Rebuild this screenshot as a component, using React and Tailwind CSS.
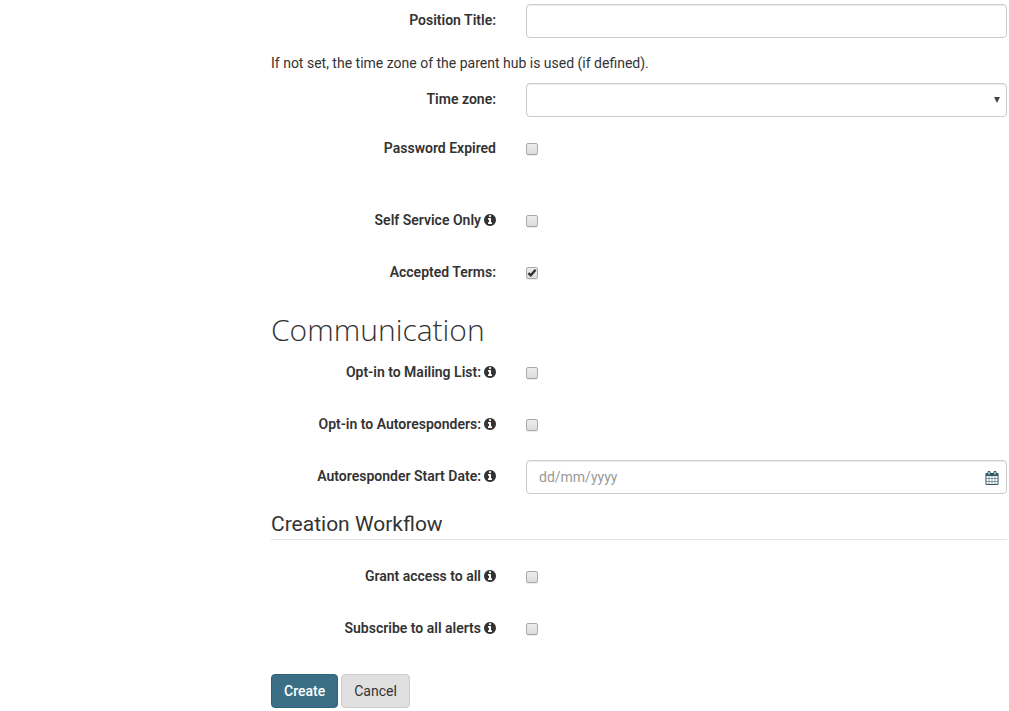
import { useState } from 'react';

const inputClass =
  'block h-[34px] w-full appearance-none rounded border border-[#ccc] bg-white px-3 py-1.5 text-sm text-[#555] shadow-[inset_0_1px_1px_rgba(0,0,0,0.075)] outline-none placeholder:text-[#999] focus:border-[#66afe9]';

function InfoIcon() {
  return (
    <svg className="h-3.5 w-3 shrink-0" viewBox="128 0 1536 1792" fill="currentColor" aria-hidden="true">
      <path d="M1152 1376v-160q0-14-9-23t-23-9h-96v-512q0-14-9-23t-23-9h-320q-14 0-23 9t-9 23v160q0 14 9 23t23 9h96v320h-96q-14 0-23 9t-9 23v160q0 14 9 23t23 9h448q14 0 23-9t9-23zm-128-896v-160q0-14-9-23t-23-9h-192q-14 0-23 9t-9 23v160q0 14 9 23t23 9h192q14 0 23-9t9-23zm640 416q0 209-103 385.5t-279.5 279.5-385.5 103-385.5-103-279.5-279.5-103-385.5 103-385.5 279.5-279.5 385.5-103 385.5 103 279.5 279.5 103 385.5z" />
    </svg>
  );
}

function CalendarIcon() {
  return (
    <svg className="size-3.5" viewBox="0 0 1792 1792" fill="currentColor" aria-hidden="true">
      <path d="M192 1664h288v-288h-288v288zm352 0h320v-288h-320v288zm-352-352h288v-320h-288v320zm352 0h320v-320h-320v320zm-352-384h288v-288h-288v288zm736 736h320v-288h-320v288zm-384-736h320v-288h-320v288zm768 736h288v-288h-288v288zm-384-352h320v-320h-320v320zm-352-864v-288q0-13-9.5-22.5t-22.5-9.5h-64q-13 0-22.5 9.5t-9.5 22.5v288q0 13 9.5 22.5t22.5 9.5h64q13 0 22.5-9.5t9.5-22.5zm736 864h288v-320h-288v320zm-384-384h320v-288h-320v288zm384 0h288v-288h-288v288zm32-480v-288q0-13-9.5-22.5t-22.5-9.5h-64q-13 0-22.5 9.5t-9.5 22.5v288q0 13 9.5 22.5t22.5 9.5h64q13 0 22.5-9.5t9.5-22.5zm384-64v1280q0 52-38 90t-90 38h-1408q-52 0-90-38t-38-90v-1280q0-52 38-90t90-38h128v-96q0-66 47-113t113-47h64q66 0 113 47t47 113v96h384v-96q0-66 47-113t113-47h64q66 0 113 47t47 113v96h128q52 0 90 38t38 90z" />
    </svg>
  );
}

function FormRow({ id, label, info, children }) {
  return (
    <div className="mb-[15px] grid grid-cols-[225px_1fr] gap-[30px]">
      <label htmlFor={id} className="flex items-center justify-end gap-[3px] self-start pt-1.5 text-right font-semibold">
        {label}
        {info && <InfoIcon />}
      </label>
      <div>{children}</div>
    </div>
  );
}

function CheckboxRow({ id, label, info, checked, onChange }) {
  return (
    <FormRow id={id} label={label} info={info}>
      <div className="grid h-[37px] items-start justify-items-start pt-[11px]">
        <input
          id={id}
          type="checkbox"
          checked={checked}
          onChange={onChange}
          className="col-start-1 row-start-1 size-3 appearance-none rounded-xs border border-[#a9a9a9] bg-linear-to-b from-[#ededed] to-[#dcdcdc] shadow-[0_1px_0_rgba(0,0,0,0.08)]"
        />
        {checked && (
          <svg className="pointer-events-none col-start-1 row-start-1 size-3" viewBox="0 0 12 12" fill="none" stroke="#333" strokeWidth="2.4" aria-hidden="true">
            <path d="M2.4 6.2l2.4 2.2L9.6 2.8" />
          </svg>
        )}
      </div>
    </FormRow>
  );
}

export default function App() {
  const [form, setForm] = useState({
    passwordExpired: false,
    selfService: false,
    acceptedTerms: true,
    mailingList: false,
    autoresponders: false,
    grantAccess: false,
    subscribeAlerts: false,
  });

  const check = (id) => ({
    id,
    checked: form[id],
    onChange: (e) => setForm({ ...form, [id]: e.target.checked }),
  });

  return (
    <div className="bg-white font-['Roboto',sans-serif] text-sm leading-5 text-[#333]">
      <form className="ml-64 pt-1 pr-0.5 pb-[3px] pl-[15px]" onSubmit={(e) => e.preventDefault()}>
        <FormRow id="positionTitle" label="Position Title:">
          <input id="positionTitle" type="text" className={inputClass} />
        </FormRow>

        <p className="mb-2.5">If not set, the time zone of the parent hub is used (if defined).</p>
        <FormRow id="timeZone" label="Time zone:">
          <div className="relative">
            <select id="timeZone" className={inputClass}>
              <option value=""></option>
            </select>
            <svg className="pointer-events-none absolute top-3.5 right-1.5 h-1.5 w-2" viewBox="0 0 8 6" fill="#444" aria-hidden="true">
              <path d="M1 0h6L4 6z" />
            </svg>
          </div>
        </FormRow>

        <div className="pb-5">
          <CheckboxRow {...check('passwordExpired')} label="Password Expired" />
        </div>
        <CheckboxRow {...check('selfService')} label="Self Service Only" info />
        <CheckboxRow {...check('acceptedTerms')} label="Accepted Terms:" />

        <h2 className="mb-1.5 pt-0.5 font-['Open_Sans',sans-serif] text-[30px] leading-10 font-light">
          Communication
        </h2>
        <CheckboxRow {...check('mailingList')} label="Opt-in to Mailing List:" info />
        <CheckboxRow {...check('autoresponders')} label="Opt-in to Autoresponders:" info />
        <FormRow id="startDate" label="Autoresponder Start Date:" info>
          <div className="relative">
            <input id="startDate" type="text" placeholder="dd/mm/yyyy" className={inputClass} />
            <button type="button" aria-label="Pick a date" className="absolute top-[11px] right-2 text-[#2f5568]">
              <CalendarIcon />
            </button>
          </div>
        </FormRow>

        <h3 className="mb-5 border-b border-[#e5e5e5] text-[21px] leading-[30px]">Creation Workflow</h3>
        <CheckboxRow {...check('grantAccess')} label="Grant access to all" info />
        <CheckboxRow {...check('subscribeAlerts')} label="Subscribe to all alerts" info />

        <div className="flex gap-[3px] pt-2.5">
          <button type="submit" className="rounded border border-[#32607a] bg-[#3a6f85] px-3 py-1.5 font-medium text-white">
            Create
          </button>
          <button type="button" className="rounded border border-[#ccc] bg-[#e0e0e0] px-3 py-1.5 text-[#333]">
            Cancel
          </button>
        </div>
      </form>
    </div>
  );
}
